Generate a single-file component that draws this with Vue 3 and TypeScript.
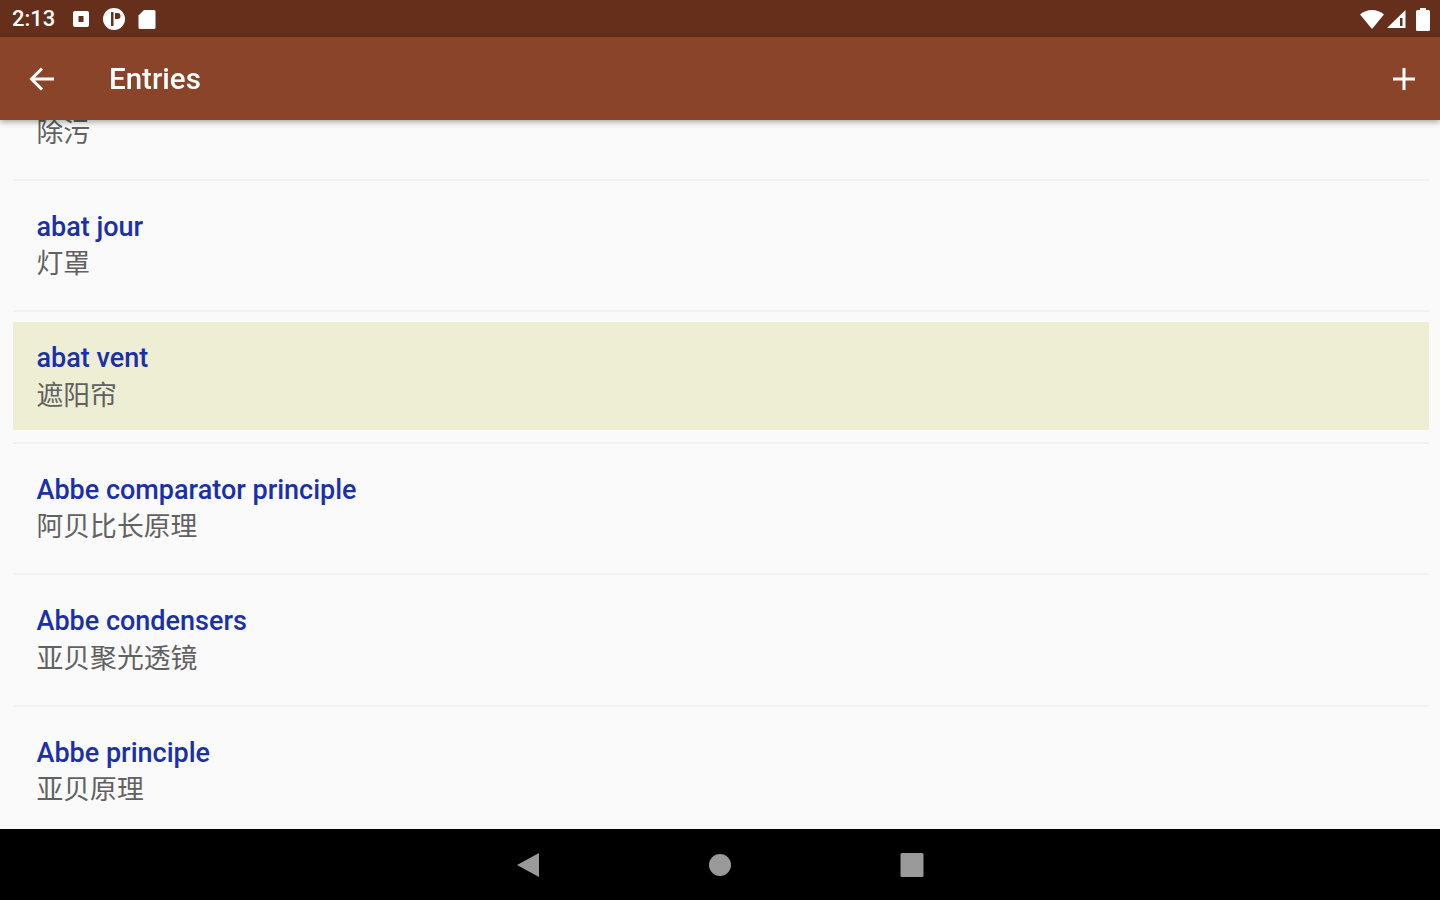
<script setup lang="ts">
// Entries shown in the list, the first one is scrolled under the toolbar
const entries = [
  { id: 1, word: "abatement", meaning: "除污", active: false },
  { id: 2, word: "abat jour", meaning: "灯罩", active: false },
  { id: 3, word: "abat vent", meaning: "遮阳帘", active: true },
  { id: 4, word: "Abbe comparator principle", meaning: "阿贝比长原理", active: false },
  { id: 5, word: "Abbe condensers", meaning: "亚贝聚光透镜", active: false },
  { id: 6, word: "Abbe principle", meaning: "亚贝原理", active: false },
]
</script>

<template>
  <div class="screen">
    <div class="status-bar">
      <div class="status-left">
        <span class="clock">2:13</span>
        <svg class="status-icon" width="18" height="18" viewBox="0 0 18 18">
          <path fill="#fff" fill-rule="evenodd" d="M3 1h12a2 2 0 0 1 2 2v12a2 2 0 0 1-2 2H3a2 2 0 0 1-2-2V3a2 2 0 0 1 2-2zm3.500 5v6h5V6z" />
        </svg>
        <svg class="status-icon" width="24" height="24" viewBox="0 0 24 24">
          <circle cx="12" cy="12" r="11" fill="#fff" />
          <path fill="#652f1c" d="M9 5h2.500v14H9zM13 6h2.500a3 3 0 0 1 0 6H13z" />
        </svg>
        <svg class="status-icon" width="18" height="20" viewBox="0 0 18 20">
          <path fill="#fff" d="M6 1h10a1.500 1.500 0 0 1 1.500 1.500v16A1.500 1.500 0 0 1 16 20H2a1.500 1.500 0 0 1-1.500-1.500V6.500z" />
        </svg>
      </div>
      <div class="status-right">
        <svg width="24" height="20" viewBox="0 0 24 20">
          <path fill="#fff" d="M0 5.500C3.500 2.500 7.500 1 12 1s8.500 1.500 12 4.500L12 20z" />
        </svg>
        <svg class="signal" width="20" height="20" viewBox="0 0 20 20">
          <path fill="#fff" d="M19.500 1v18H1z" />
          <path fill="#652f1c" d="M14 9h2.500v8H14z" />
        </svg>
        <svg width="16" height="24" viewBox="0 0 16 24">
          <path fill="#fff" d="M5 1h6v2h2.500A1.500 1.500 0 0 1 15 4.500v18a1.500 1.500 0 0 1-1.500 1.500h-11A1.500 1.500 0 0 1 1 22.500v-18A1.500 1.500 0 0 1 2.500 3H5z" />
        </svg>
      </div>
    </div>

    <div class="toolbar">
      <svg class="back" width="26" height="26" viewBox="0 0 26 26">
        <path fill="none" stroke="#fff" stroke-width="3" d="M25 13H3M13 2.500 2.500 13 13 23.500" />
      </svg>
      <span class="title">Entries</span>
      <svg class="add" width="24" height="24" viewBox="0 0 24 24">
        <path fill="none" stroke="#fff" stroke-width="3" d="M12 1v22M1 12h22" />
      </svg>
    </div>

    <div class="list">
      <div class="list-inner">
        <div v-for="entry in entries" :key="entry.id" class="row">
          <div class="card" :class="{ active: entry.active }">
            <div class="word">{{ entry.word }}</div>
            <div class="meaning">{{ entry.meaning }}</div>
          </div>
        </div>
      </div>
    </div>

    <div class="nav-bar">
      <svg width="24" height="26" viewBox="0 0 24 26">
        <path fill="#9a9a9a" d="M23 1v24L1 13z" />
      </svg>
      <svg width="24" height="24" viewBox="0 0 24 24">
        <circle cx="12" cy="12" r="11" fill="#9a9a9a" />
      </svg>
      <svg width="24" height="26" viewBox="0 0 24 26">
        <rect x="0.500" y="1" width="23" height="24" rx="1.500" fill="#9a9a9a" />
      </svg>
    </div>
  </div>
</template>

<style>
html,
body {
  margin: 0;
  background: #fafafa;
}
</style>

<style scoped>
.screen {
  width: 1440px;
  height: 900px;
  display: flex;
  flex-direction: column;
  overflow: hidden;
  font-family: Roboto, "Noto Sans CJK SC", sans-serif;
  /* the reference is an upscaled, soft capture */
  filter: blur(0.6px);
}

.status-bar {
  height: 37px;
  flex: none;
  background: #652f1c;
  display: flex;
  align-items: center;
  justify-content: space-between;
  padding: 0 9px 0 12px;
}

.status-left {
  display: flex;
  align-items: center;
}

.clock {
  color: #fff;
  font-size: 22px;
  font-weight: 500;
  width: 60px;
}

.status-icon {
  margin-right: 12px;
}

.status-right {
  display: flex;
  align-items: center;
  gap: 2px;
}

.signal {
  margin-right: 7px;
}

.toolbar {
  height: 83px;
  flex: none;
  background: #89442a;
  display: flex;
  align-items: center;
  padding: 0 24px 0 29px;
  position: relative;
  z-index: 1;
  box-shadow: 0 2px 6px rgba(0, 0, 0, 0.35);
}

.back {
  flex: none;
}

.title {
  flex: 1;
  margin-left: 54px;
  color: #fff;
  font-size: 29.500px;
  font-weight: 500;
}

.list {
  flex: 1;
  min-height: 0;
  overflow: hidden;
  background: #fafafa;
}

.list-inner {
  margin-top: -70.600px;
}

.row {
  margin: 0 11px 0 12.500px;
  padding: 10px 0 0;
  height: 131.500px;
  box-sizing: border-box;
  border-bottom: 2px solid #f1f1f1;
}

.card {
  height: 107.500px;
  box-sizing: border-box;
  padding: 18px 24px 0;
}

.card.active {
  background: #eeeed4;
}

.word {
  color: #1b30a8;
  font-size: 27px;
  font-weight: 500;
  line-height: 37.500px;
}

.meaning {
  color: #616161;
  font-size: 26.800px;
  line-height: 37px;
}

.nav-bar {
  height: 71px;
  flex: none;
  background: #000;
  display: flex;
  align-items: center;
  justify-content: center;
  gap: 168px;
  position: relative;
  z-index: 1;
}
</style>
